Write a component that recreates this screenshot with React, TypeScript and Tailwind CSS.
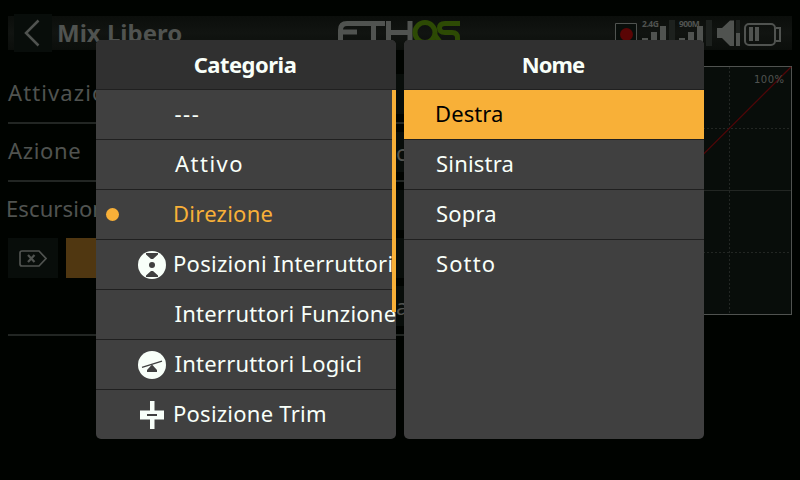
import React from "react";

const rowText = "whitespace-pre text-[22px] leading-[30px]";

function Logo() {
  return (
    <svg className="mt-1 shrink-0" width="126" height="28" viewBox="0 0 126 28" fill="none" strokeWidth="5">
      <g stroke="#505350">
        <path d="M2.500 28V10Q2.500 3.500 9 3.500H47M2.500 12H19M35.500 3.500V28M50.500 1V28M50.500 12.500H71M72 1V28" />
      </g>
      <g stroke="#2d4a04">
        <circle cx="87" cy="12.500" r="10" />
        <path d="M122 3.500H107Q101.500 3.500 101.500 8T107 12.500H114Q119.500 12.500 119.500 18V28M96 14L102 22" />
      </g>
    </svg>
  );
}

function StatusIcons() {
  return (
    <svg width="178" height="34" viewBox="0 0 178 34" fill="#505350">
      <path d="M1.500 7.500H22.500V30H1.500Z" fill="#090e0b" stroke="#505350" />
      <circle cx="12.500" cy="18.500" r="6.500" fill="#5a0505" />
      <text x="28" y="11" fontSize="8.500" fontWeight="700" letterSpacing="-0.450">2.4G</text>
      <path d="M28 22H34V30H28ZM37 16H43V30H37ZM46 10H52V30H46Z" />
      <path d="M55 4H61V30H55Z" fill="#1d211e" />
      <text x="65" y="11" fontSize="8.500" fontWeight="700" letterSpacing="-0.600">900M</text>
      <path d="M65 22H71V30H65ZM74 16H80V30H74ZM83 10H89V30H83Z" />
      <path d="M92 4H98V30H92Z" fill="#1d211e" />
      <path d="M103 12H108L116 4.500H120V30H116L108 22H103Z" />
      <path d="M122 4H126V17H122Z" fill="#1d211e" />
      <path d="M122 17H126V30H122Z" />
      <rect x="131" y="8" width="30" height="21" rx="4" fill="none" stroke="#505350" strokeWidth="2" />
      <path d="M135 11H139V25H135ZM141 11H145V25H141Z" />
      <path d="M162 12H166V25H162" fill="none" stroke="#505350" strokeWidth="2" />
    </svg>
  );
}

function Curve() {
  return (
    <svg width="250" height="249" viewBox="0 0 250 249">
      <rect x="0.500" y="0.500" width="249" height="248" fill="#080d0a" stroke="#505350" />
      <path d="M1 124.500H249" stroke="#222623" />
      <path d="M1 62.500H249M1 186.500H249M187.500 1V248" stroke="#222623" strokeDasharray="2 2" />
      <path d="M1 248L249 1" stroke="#500608" strokeWidth="1.300" />
      <text x="212" y="17" fontSize="10" fill="#505350" letterSpacing="0.500" className="font-['DejaVu_Sans',sans-serif]">
        100%
      </text>
    </svg>
  );
}

function SwitchIcon() {
  return (
    <svg width="28" height="28" viewBox="0 0 28 28">
      <circle cx="14" cy="14" r="14" fill="#f8fff9" />
      <path d="M8 2H20V3.500L15 8H13L8 3.500ZM8 26H20V24.500L15 20H13L8 24.500Z" fill="#404040" />
      <circle cx="14" cy="14" r="3" fill="#404040" />
    </svg>
  );
}

function LogicIcon() {
  return (
    <svg width="28" height="28" viewBox="0 0 28 28">
      <circle cx="14" cy="14" r="14" fill="#f8fff9" />
      <path d="M4 16.300L24 10.200" stroke="#404040" strokeWidth="1.400" />
      <path d="M14 13.500L19 19V21H9V19Z" fill="#404040" />
    </svg>
  );
}

function TrimIcon() {
  return (
    <svg width="28" height="28" viewBox="0 0 28 28">
      <path d="M12 0H16.500V9.500H26V18.500H16.500V28H12V18.500H2V9.500H12Z" fill="#f8fff9" />
      <path d="M9 13H19V15H9Z" fill="#404040" />
    </svg>
  );
}

type Category = { label: string; spacing: string; icon?: React.ReactNode; selected?: boolean };

const categories: Category[] = [
  { label: "---", spacing: "tracking-[1.5px] pl-[1.5px]" },
  { label: "Attivo", spacing: "tracking-[1.5px] pl-[2px]" },
  { label: "Direzione", spacing: "tracking-[0.25px]", selected: true },
  { label: "Posizioni Interruttori", spacing: "tracking-[0.28px]", icon: <SwitchIcon /> },
  { label: "Interruttori Funzione", spacing: "tracking-[0.24px] pl-[1.5px]" },
  { label: "Interruttori Logici", spacing: "tracking-[0.24px] pl-[1.5px]", icon: <LogicIcon /> },
  { label: "Posizione Trim", spacing: "tracking-[0.24px]", icon: <TrimIcon /> },
];

const names = [
  { label: "Destra", spacing: "tracking-[0.1px]" },
  { label: "Sinistra", spacing: "tracking-[0.2px] pl-px" },
  { label: "Sopra", spacing: "tracking-[0.2px] pl-px" },
  { label: "Sotto", spacing: "tracking-[1.1px] pl-px" },
];

function Panel({ title, spacing, children }: { title: string; spacing: string; children: React.ReactNode }) {
  return (
    <section className="relative h-[399px] w-[300px] overflow-hidden rounded-[5px] bg-[#404040] text-[#f8fff9]">
      <h2
        className={`flex h-[50px] items-center justify-center border-b border-[#202020] bg-[#303030] pr-0.5 text-[22px] font-bold ${spacing}`}
      >
        {title}
      </h2>
      {children}
    </section>
  );
}

function Field({ text }: { text?: string }) {
  return (
    <div className="flex h-10 w-[300px] items-center bg-[#080d0a] pl-[162px]">
      <span className={rowText}>{text}</span>
    </div>
  );
}

export default function App() {
  return (
    <main className="relative h-[480px] w-[800px] overflow-hidden bg-[#000300] font-['Noto_Sans',sans-serif] text-[#505350]">
      <header className="mx-2 mt-4 flex h-[34px] bg-linear-to-b from-[#0b0e0b] via-[#111411] to-[#0b0e0b]">
        <div className="-mt-0.5 ml-1.5 flex h-[38px] w-[38px] shrink-0 items-center justify-center bg-[#080d0a]">
          <svg width="18" height="28" viewBox="0 0 18 28" fill="none" stroke="#505350" strokeWidth="2.500">
            <path d="M14.500 1.500L2 14L14.500 26.500" />
          </svg>
        </div>
        <h1 className="ml-[5px] w-[281px] shrink-0 text-[24px] leading-[34px] font-bold">Mix Libero</h1>
        <Logo />
        <div className="ml-[150px] shrink-0">
          <StatusIcons />
        </div>
      </header>
      <div className="flex pt-4 pl-2">
        <div className="w-[526px]">
          <div className="flex h-[58px] items-center justify-between border-b-2 border-[#222623]">
            <span className={`${rowText} pb-1 tracking-[1.1px]`}>Attivazione</span>
            <Field />
          </div>
          <div className="flex h-[58px] items-center justify-between border-b-2 border-[#222623]">
            <span className={`${rowText} pb-1 tracking-[0.65px]`}>Azione</span>
            <Field text="c" />
          </div>
          <div className="flex h-[56px] items-center justify-between">
            <span className={`${rowText} -ml-0.5 pb-1 tracking-[0.1px]`}>Escursione</span>
            <Field />
          </div>
          <div className="flex h-10 gap-2">
            <div className="flex w-[50px] items-center justify-center bg-[#080d0a]">
              <svg width="28" height="17" viewBox="0 0 28 17" fill="none" stroke="#505350" strokeWidth="1.700">
                <path d="M3 1H20L27 8.500L20 16H3Q1 16 1 14V3Q1 1 3 1Z" />
                <path d="M9 5L15.500 12M15.500 5L9 12" strokeWidth="2.200" />
              </svg>
            </div>
            <div className="w-[160px] bg-[#503711]" />
            <div className="flex-1 bg-[#080d0a]" />
          </div>
          <div className="flex h-[58px] items-center justify-end border-b-2 border-[#222623]">
            <Field text="a" />
          </div>
        </div>
        <div className="ml-2">
          <Curve />
        </div>
      </div>

      <div className="absolute top-10 left-24 flex gap-2">
        <Panel title="Categoria" spacing="tracking-[-0.5px]">
          {categories.map((c) => (
            <div
              key={c.label}
              className={`flex h-[50px] items-center border-b border-[#202020] ${c.selected ? "text-[#f8b038]" : ""}`}
            >
              <div className="w-[42px] shrink-0 pl-2.5">
                {c.selected && <div className="h-[13px] w-[13px] rounded-full bg-[#f8b038]" />}
              </div>
              <div className="w-[35px] shrink-0">{c.icon}</div>
              <span className={`${rowText} pb-[3px] ${c.spacing}`}>{c.label}</span>
            </div>
          ))}
          <div className="absolute top-[50px] right-0 h-[222px] w-1 bg-[#f8b038]" />
        </Panel>
        <Panel title="Nome" spacing="tracking-[-0.9px]">
          {names.map((n, i) => (
            <div
              key={n.label}
              className={`flex h-[50px] items-center border-b pl-[31px] ${i === 0 ? "bg-[#f8b038] text-black" : ""} ${
                i < 3 ? "border-[#202020]" : "border-transparent"
              }`}
            >
              <span className={`${rowText} pb-[3px] ${n.spacing}`}>{n.label}</span>
            </div>
          ))}
        </Panel>
      </div>
    </main>
  );
}
